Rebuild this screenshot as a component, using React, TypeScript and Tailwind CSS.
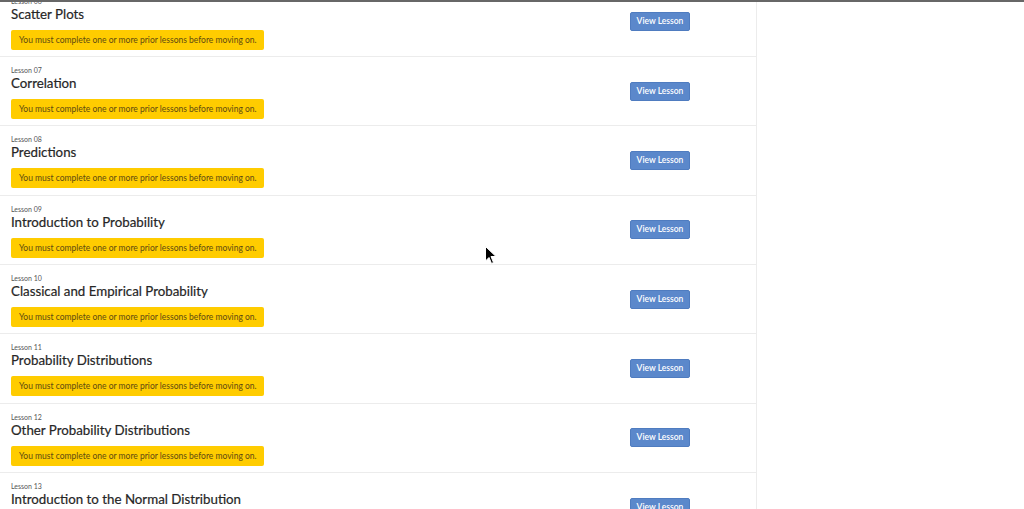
const lessons = [
  { num: '06', title: 'Scatter Plots' },
  { num: '07', title: 'Correlation' },
  { num: '08', title: 'Predictions' },
  { num: '09', title: 'Introduction to Probability' },
  { num: '10', title: 'Classical and Empirical Probability' },
  { num: '11', title: 'Probability Distributions' },
  { num: '12', title: 'Other Probability Distributions' },
  { num: '13', title: 'Introduction to the Normal Distribution' },
];

function LessonRow({ num, title }: { num: string; title: string }) {
  return (
    <div className="h-[69.33px] shrink-0 flex items-center justify-between pl-[11px] pr-[66px] border-b border-[#ececec]">
      <div className="flex flex-col self-start pt-[9px]">
        <p className="text-[7px] leading-[9px] text-[#555]">Lesson {num}</p>
        <h3 className="text-[13.3px] leading-[17px] text-[#262626] [-webkit-text-stroke:0.2px_#262626]">{title}</h3>
        <div className="mt-[7px] w-[253px] h-[20px] flex items-center pl-[8px] rounded-[2px] bg-[#ffcc00] text-[8.5px] leading-[10px] whitespace-nowrap text-[#5e4a12]">
          You must complete one or more prior lessons before moving on.
        </div>
      </div>
      <button className="w-[60px] h-[19px] rounded-[2px] bg-[#5b88cb] border border-[#4f7cc0] text-white text-[8.5px] font-semibold">
        View Lesson
      </button>
    </div>
  );
}

export default function App() {
  return (
    <div
      className="relative h-[509px] overflow-hidden bg-white border-t-2 border-[#676767]"
      style={{ fontFamily: 'Lato, "Open Sans", sans-serif' }}
    >
      <div className="flex h-full">
        <div className="w-[757px] h-full border-r border-[#ececec] flex flex-col">
          <div className="mt-[-14.33px] flex flex-col">
            {lessons.map((l) => (
              <LessonRow key={l.num} {...l} />
            ))}
          </div>
        </div>
        <div className="flex-1" />
      </div>

      {/* mouse pointer */}
      <svg className="absolute left-[485px] top-[244px]" width="12" height="19" viewBox="0 0 12 19">
        <path d="M0.5 0.5 L0.5 15 L4 11.5 L6.5 17.5 L8.5 16.5 L6 10.5 L11 10.5 Z" fill="#000" stroke="#fff" strokeWidth="1" />
      </svg>
    </div>
  );
}
